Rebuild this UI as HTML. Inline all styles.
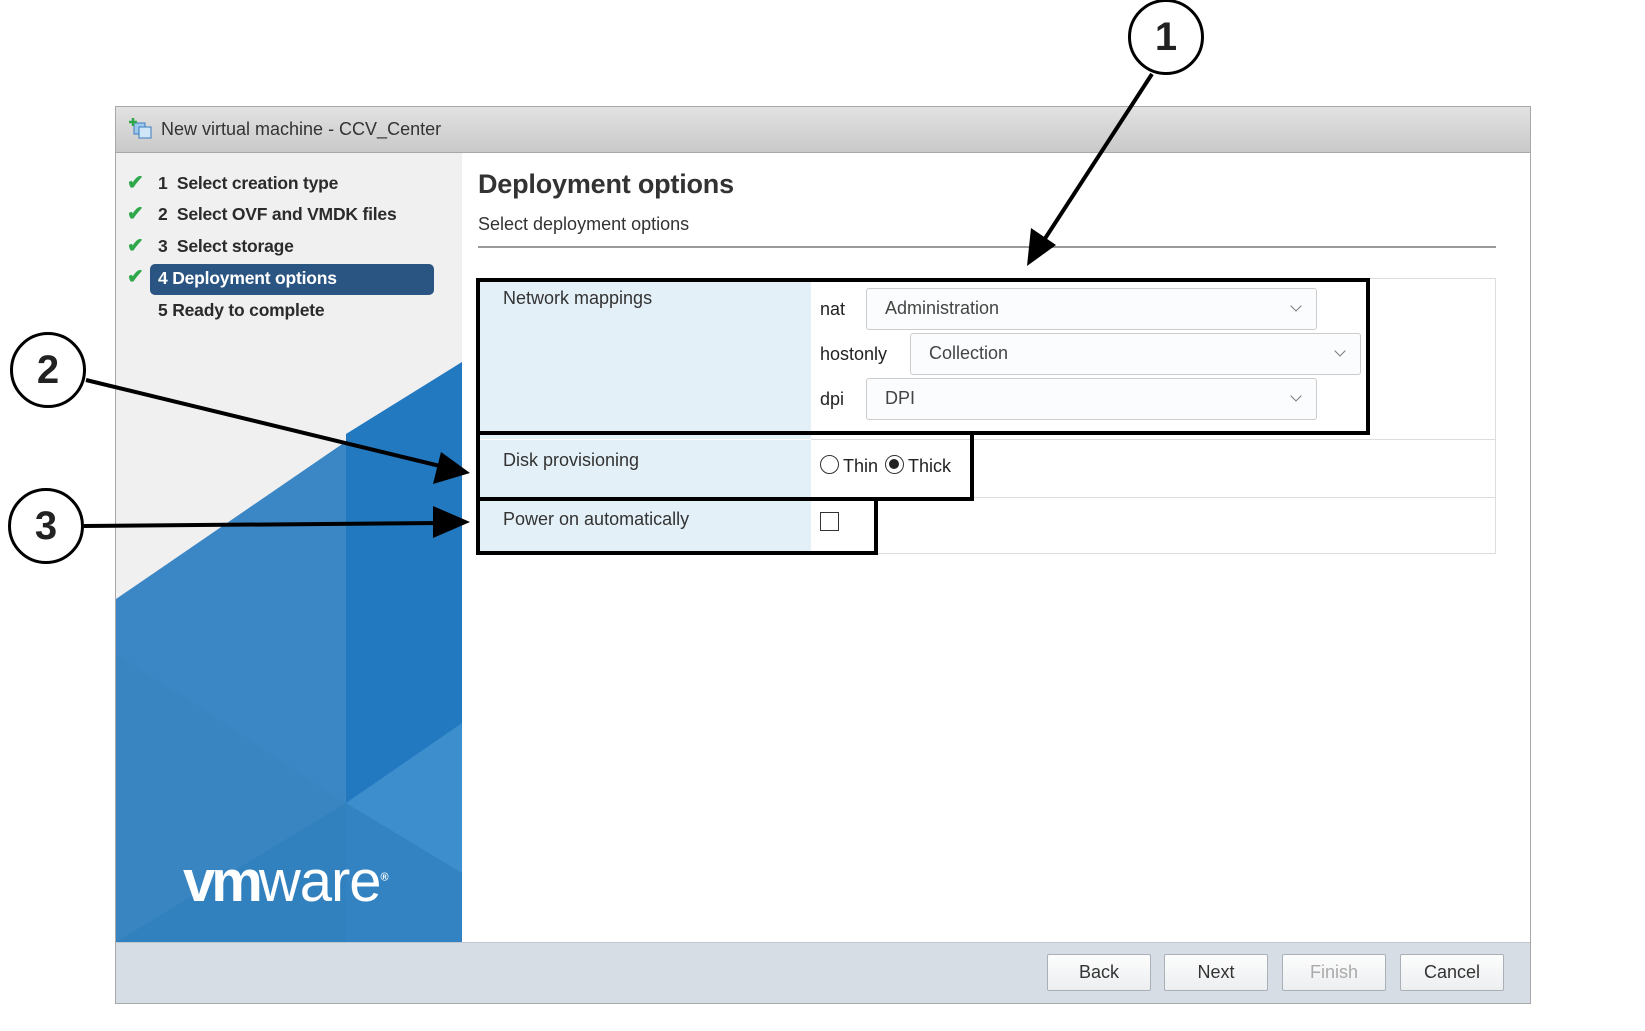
<!DOCTYPE html>
<html><head><meta charset="utf-8"><style>
*{margin:0;padding:0;box-sizing:border-box}
body{width:1645px;height:1031px;background:#fff;position:relative;overflow:hidden;font-family:"Liberation Sans",Arial,sans-serif;color:#222}
.a{position:absolute}
.win{left:115px;top:106px;width:1416px;height:898px;border:1px solid #a8a8a8}
.title{left:115px;top:106px;width:1416px;height:47px;background:linear-gradient(#e2e2e2,#c9c9c9);border:1px solid #a8a8a8;font-size:18px;color:#333;padding:12px 0 0 45px}
.panel{left:116px;top:153px;width:346px;height:789px;background:#f0f0f1;overflow:hidden}
.nav{font-size:17.5px;color:#2b2b2b;font-weight:bold;letter-spacing:-0.2px}
.chk{color:#2ea84a;font-size:20px;font-weight:bold}
.hl{left:150px;top:264px;width:284px;height:31px;background:#2a5582;border-radius:5px}
.footer{left:116px;top:942px;width:1414px;height:61px;background:#d7dde5;border-top:1px solid #c0c6ce}
.btn{top:954px;width:104px;height:37px;border:1px solid #a9b0b8;background:linear-gradient(#fdfdfd,#eceef0);border-radius:2px;font-size:18px;text-align:center;line-height:35px;color:#333}
.tbl{left:478px;top:278px;width:1018px;height:276px;border:1px solid #ddd}
.lab{background:#e4f0f8;left:478px;width:333px}
.sel{height:42px;border:1px solid #ccc;border-radius:3px;background:#fbfcfd;font-size:18px;color:#444;padding:9px 0 0 18px}
.sel:after{content:"";position:absolute;right:16px;top:13px;width:7px;height:7px;border-right:1.5px solid #777;border-bottom:1.5px solid #777;transform:rotate(45deg)}
.box{border:4px solid #000}
.circ{width:76px;height:76px;border:3px solid #000;border-radius:50%;background:#fff;font-size:40px;font-weight:bold;text-align:center;line-height:70px}
</style></head><body>
<div class="a win"></div>
<div class="a title">New virtual machine - CCV_Center</div>
<svg class="a" style="left:128px;top:117px" width="26" height="24"><rect x="6" y="6" width="11" height="11" fill="#9cc9ec" stroke="#3a7cc0"/><rect x="11" y="10" width="12" height="11" fill="#cfe6f8" stroke="#3a7cc0"/><path d="M5 1v8M1 5h8" stroke="#2ea84a" stroke-width="2.5"/></svg>
<div class="a panel">
<svg width="346" height="789" style="position:absolute;left:0;top:0">
<polygon points="346,209 346,789 0,789 0,446" fill="#3b86c4"/>
<polygon points="230,281 346,209 346,789 230,789" fill="#2279c0"/>
<polygon points="0,500 230,650 230,789 0,789" fill="#3a84c0" opacity=".8"/>
<polygon points="230,650 346,570 346,789 230,789" fill="#3d8ecd"/>
<polygon points="0,789 230,650 346,720 346,789" fill="#2f7fbe" opacity=".7"/>
</svg>
</div>
<div class="a hl"></div>
<div class="a chk" style="left:127px;top:170px">✔</div>
<div class="a chk" style="left:127px;top:201px">✔</div>
<div class="a chk" style="left:127px;top:233px">✔</div>
<div class="a chk" style="left:127px;top:264px">✔</div>
<div class="a nav" style="left:158px;top:173px">1&nbsp; Select creation type</div>
<div class="a nav" style="left:158px;top:204px">2&nbsp; Select OVF and VMDK files</div>
<div class="a nav" style="left:158px;top:236px">3&nbsp; Select storage</div>
<div class="a nav" style="left:158px;top:268px;color:#fff">4 Deployment options</div>
<div class="a nav" style="left:158px;top:300px">5 Ready to complete</div>
<div class="a" style="left:183px;top:848px;color:#fff;font-size:58px;font-weight:bold;letter-spacing:-4px">vm<span style="font-weight:normal;letter-spacing:-1px">ware</span><sup style="font-size:11px">®</sup></div>
<div class="a" style="left:478px;top:169px;font-size:27px;font-weight:bold;color:#333;letter-spacing:-0.2px">Deployment options</div>
<div class="a" style="left:478px;top:214px;font-size:18px;color:#333">Select deployment options</div>
<div class="a" style="left:478px;top:246px;width:1018px;height:2px;background:#999"></div>
<div class="a tbl"></div>
<div class="a lab" style="top:279px;height:160px"></div>
<div class="a lab" style="top:440px;height:57px"></div>
<div class="a lab" style="top:498px;height:56px"></div>
<div class="a" style="left:811px;top:439px;width:685px;height:1px;background:#ddd"></div>
<div class="a" style="left:811px;top:497px;width:685px;height:1px;background:#ddd"></div>
<div class="a" style="left:503px;top:288px;font-size:18px;color:#333">Network mappings</div>
<div class="a" style="left:503px;top:450px;font-size:18px;color:#333">Disk provisioning</div>
<div class="a" style="left:503px;top:509px;font-size:18px;color:#333">Power on automatically</div>
<div class="a" style="left:820px;top:299px;font-size:18px">nat</div>
<div class="a" style="left:820px;top:344px;font-size:18px">hostonly</div>
<div class="a" style="left:820px;top:389px;font-size:18px">dpi</div>
<div class="a sel" style="left:866px;top:288px;width:451px">Administration</div>
<div class="a sel" style="left:910px;top:333px;width:451px">Collection</div>
<div class="a sel" style="left:866px;top:378px;width:451px">DPI</div>
<div class="a" style="left:820px;top:455px;width:19px;height:19px;border:1.5px solid #333;border-radius:50%"></div>
<div class="a" style="left:843px;top:456px;font-size:18px">Thin</div>
<div class="a" style="left:885px;top:455px;width:19px;height:19px;border:1.5px solid #333;border-radius:50%"><div style="margin:3px;width:10px;height:10px;background:#222;border-radius:50%"></div></div>
<div class="a" style="left:908px;top:456px;font-size:18px">Thick</div>
<div class="a" style="left:820px;top:512px;width:19px;height:19px;border:1.5px solid #333"></div>
<div class="a box" style="left:476px;top:278px;width:894px;height:157px"></div>
<div class="a box" style="left:476px;top:431px;width:498px;height:70px"></div>
<div class="a box" style="left:476px;top:497px;width:402px;height:58px"></div>
<div class="a footer"></div>
<div class="a btn" style="left:1047px">Back</div>
<div class="a btn" style="left:1164px">Next</div>
<div class="a btn" style="left:1282px;color:#aaa">Finish</div>
<div class="a btn" style="left:1400px">Cancel</div>
<svg class="a" style="left:0;top:0" width="1645" height="1031">
<line x1="1152" y1="74" x2="1035" y2="254" stroke="#000" stroke-width="4"/>
<line x1="86" y1="380" x2="440" y2="466" stroke="#000" stroke-width="4"/>
<line x1="84" y1="526" x2="440" y2="523" stroke="#000" stroke-width="4"/>
<polygon points="1027,266 1031,228 1056,245" fill="#000"/>
<polygon points="470,473 433,484 441,452" fill="#000"/>
<polygon points="470,522 433,538 433,506" fill="#000"/>
</svg>
<div class="a circ" style="left:1128px;top:-1px">1</div>
<div class="a circ" style="left:10px;top:332px">2</div>
<div class="a circ" style="left:8px;top:488px">3</div>
</body></html>
